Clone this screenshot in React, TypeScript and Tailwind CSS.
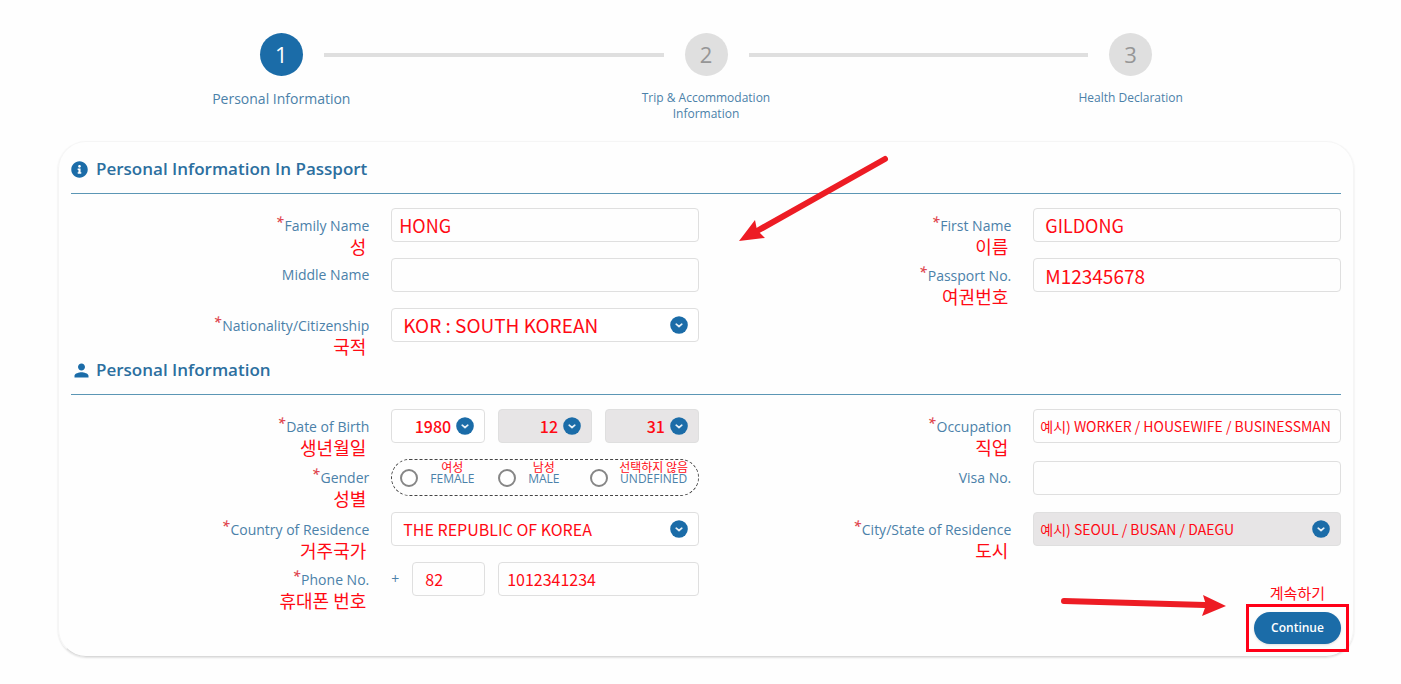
import React from "react";
import { FaInfoCircle } from "react-icons/fa";
import { MdPerson } from "react-icons/md";

const NOTE =
  "font-['Noto_Sans_CJK_KR',sans-serif] text-[#ff0a14] whitespace-nowrap";

const BOX =
  "block w-full h-[34px] rounded border border-[#dfdfdf] disabled:opacity-100 outline-none font-['Noto_Sans_CJK_KR',sans-serif] text-[#ff0a14]";

function Step({
  number,
  title,
  active = false,
  first = false,
  last = false,
}: {
  number: number;
  title: string;
  active?: boolean;
  first?: boolean;
  last?: boolean;
}) {
  return (
    <li className="flex flex-col items-center">
      <div className="flex w-full items-center gap-[21px]">
        <div className={first ? "h-1 flex-1" : "h-1 flex-1 bg-[#dfdfdf]"} />
        <div
          className={
            active
              ? "flex size-[43px] items-center justify-center rounded-full bg-[#1b6ca8] text-[22px] text-white"
              : "flex size-[43px] items-center justify-center rounded-full bg-[#dfdfdf] text-[22px] text-[#969696]"
          }
        >
          {number}
        </div>
        <div className={last ? "h-1 flex-1" : "h-1 flex-1 bg-[#dfdfdf]"} />
      </div>
      <span
        className={
          active
            ? "mt-[15px] text-center text-sm leading-4"
            : "mt-[14px] w-[140px] text-center text-xs leading-4"
        }
      >
        {title}
      </span>
    </li>
  );
}

function SectionTitle({
  icon,
  children,
}: {
  icon: React.ReactNode;
  children: React.ReactNode;
}) {
  return (
    <h2 className="flex items-center gap-1 border-b border-[#5b96b5] pb-3 text-[17px] leading-6 font-semibold text-[#2c6f9f]">
      <span className="flex w-[21px] justify-start text-[#1b6ca8]">{icon}</span>
      {children}
    </h2>
  );
}

function Field({
  id,
  label,
  note,
  required = false,
  group = false,
  children,
}: {
  id: string;
  label: string;
  note?: string;
  required?: boolean;
  group?: boolean;
  children: React.ReactNode;
}) {
  const content = (
    <>
      {required && (
        <span className="mr-px align-[4px] text-sm leading-none font-semibold text-[#e04850] italic">
          *
        </span>
      )}
      {label}
    </>
  );

  return (
    <div className="grid grid-cols-[51%_1fr] items-center">
      <div className="relative pr-[22px] text-right text-sm leading-5">
        {group ? (
          <span id={id}>{content}</span>
        ) : (
          <label htmlFor={id}>{content}</label>
        )}
        {note && (
          <span
            className={`${NOTE} absolute top-full right-[25px] text-lg leading-5`}
          >
            {note}
          </span>
        )}
      </div>
      {children}
    </div>
  );
}

function Select({
  id,
  value,
  className,
  label,
  disabled = false,
}: {
  id: string;
  value: string;
  className: string;
  label?: string;
  disabled?: boolean;
}) {
  return (
    <div className="relative">
      <select
        id={id}
        aria-label={label}
        disabled={disabled}
        className={`${BOX} appearance-none ${disabled ? "bg-[#e7e5e6]" : "bg-white"} ${className}`}
      >
        <option>{value}</option>
      </select>
      <svg
        viewBox="0 0 18 18"
        className="pointer-events-none absolute top-2 right-[11px] size-[18px]"
      >
        <circle cx="9" cy="9" r="8.8" fill="#1b6ca8" />
        <path
          d="M6.200 8.200l2.800 2.300L11.800 8.200"
          fill="none"
          stroke="#e6f0f7"
          strokeWidth="1.7"
          strokeLinecap="round"
          strokeLinejoin="round"
        />
      </svg>
    </div>
  );
}

function Gender({ name, note }: { name: string; note: string }) {
  return (
    <label className="flex items-center gap-3">
      <input
        type="radio"
        name="gender"
        className="size-[18px] appearance-none rounded-full border-2 border-[#868686] bg-white checked:bg-[#1b6ca8]"
      />
      <span className="relative pt-[3px] text-xs">
        {name}
        <span
          className={`${NOTE} absolute bottom-3 left-1/2 -translate-x-1/2 text-xs leading-4`}
        >
          {note}
        </span>
      </span>
    </label>
  );
}

function App() {
  return (
    <div className="min-h-screen bg-[#fefefe] pt-[33px] pb-6 font-['Open_Sans',sans-serif] text-[#4b81a9]">
      <ol className="grid grid-cols-3 pr-[58px] pl-[69px]">
        <Step number={1} title="Personal Information" active first />
        <Step number={2} title="Trip & Accommodation Information" />
        <Step number={3} title="Health Declaration" last />
      </ol>

      <form className="relative mt-[19px] mr-[47px] ml-[58px] rounded-[28px] border border-[#f5f5f5] border-b-[#d9d9d9] px-3 pt-[15px] pb-3 shadow-[0_1px_2px_rgba(0,0,0,0.12)]">
        <SectionTitle icon={<FaInfoCircle size={17} />}>
          Personal Information In Passport
        </SectionTitle>
        <div className="grid grid-cols-2 gap-x-[14px] gap-y-4 pt-[14px]">
          <Field id="family" label="Family Name" note="성" required>
            <input
              id="family"
              defaultValue="HONG"
              className={`${BOX} px-[7px] text-lg`}
            />
          </Field>
          <Field id="first" label="First Name" note="이름" required>
            <input
              id="first"
              defaultValue="GILDONG"
              className={`${BOX} px-[11px] text-lg`}
            />
          </Field>
          <Field id="middle" label="Middle Name">
            <input id="middle" className={`${BOX} px-[7px] text-lg`} />
          </Field>
          <Field id="passport" label="Passport No." note="여권번호" required>
            <input
              id="passport"
              defaultValue="M12345678"
              className={`${BOX} px-[11px] text-[19px]`}
            />
          </Field>
          <Field
            id="nationality"
            label="Nationality/Citizenship"
            note="국적"
            required
          >
            <Select
              id="nationality"
              value="KOR : SOUTH KOREAN"
              className="pl-[11px] text-[19px]"
            />
          </Field>
        </div>

        <div className="mt-4">
          <SectionTitle icon={<MdPerson size={21} />}>
            Personal Information
          </SectionTitle>
        </div>
        <div className="grid grid-cols-2 gap-x-[14px] gap-y-4 pt-[14px]">
          <Field id="year" label="Date of Birth" note="생년월일" required>
            <div className="grid grid-cols-3 gap-[13px]">
              <Select
                id="year"
                value="1980"
                className="pr-[33px] text-base font-medium [text-align-last:right]"
              />
              <Select
                id="month"
                label="Month of birth"
                value="12"
                className="pr-[33px] text-base font-medium [text-align-last:right]"
                disabled
              />
              <Select
                id="day"
                label="Day of birth"
                value="31"
                className="pr-[33px] text-base font-medium [text-align-last:right]"
                disabled
              />
            </div>
          </Field>
          <Field id="occupation" label="Occupation" note="직업" required>
            <input
              id="occupation"
              defaultValue="예시) WORKER / HOUSEWIFE / BUSINESSMAN"
              className={`${BOX} pl-[6px] text-sm`}
            />
          </Field>
          <Field id="gender" label="Gender" note="성별" required group>
            <div
              role="radiogroup"
              aria-labelledby="gender"
              className="grid h-[37px] grid-cols-[98fr_92fr_108fr] items-center rounded-full border border-dashed border-[#444] pl-2"
            >
              <Gender name="FEMALE" note="여성" />
              <Gender name="MALE" note="남성" />
              <Gender name="UNDEFINED" note="선택하지 않음" />
            </div>
          </Field>
          <Field id="visa" label="Visa No.">
            <input id="visa" className={`${BOX} px-[7px] text-lg`} />
          </Field>
          <Field
            id="country"
            label="Country of Residence"
            note="거주국가"
            required
          >
            <Select
              id="country"
              value="THE REPUBLIC OF KOREA"
              className="pl-[11px] text-base"
            />
          </Field>
          <Field
            id="city"
            label="City/State of Residence"
            note="도시"
            required
          >
            <Select
              id="city"
              value="예시) SEOUL / BUSAN / DAEGU"
              className="pl-[6px] text-sm"
              disabled
            />
          </Field>
          <Field id="phone" label="Phone No." note="휴대폰 번호" required>
            <div className="grid grid-cols-3 gap-[13px]">
              <div className="flex items-center">
                <span className="w-[21px] shrink-0 text-sm">+</span>
                <input
                  aria-label="Country code"
                  defaultValue="82"
                  className={`${BOX} min-w-0 px-3 text-base`}
                />
              </div>
              <div className="col-span-2">
                <input
                  id="phone"
                  defaultValue="1012341234"
                  className={`${BOX} px-2 text-base`}
                />
              </div>
            </div>
          </Field>
        </div>

        <div className="mt-4 flex justify-end">
          <div className="relative">
            <button
              type="button"
              className="h-8 w-[87px] rounded-full bg-[#1b6ca8] text-xs font-semibold text-white shadow"
            >
              Continue
            </button>
            <div className="pointer-events-none absolute -inset-2 border-3 border-[#ff0018]" />
            <span
              className={`${NOTE} absolute right-4 bottom-[41px] text-[15px] leading-5`}
            >
              계속하기
            </span>
          </div>
        </div>

        {/* arrows over the form */}
        <svg
          viewBox="0 0 152 90"
          className="pointer-events-none absolute top-[12px] left-[680px] h-[90px] w-[152px]"
        >
          <path
            d="M146 5L18 77"
            stroke="#ed1c24"
            strokeWidth="6"
            strokeLinecap="round"
          />
          <path d="M0 87L16 66L18 76L26 84Z" fill="#ed1c24" />
        </svg>
        <svg
          viewBox="0 0 166 24"
          className="pointer-events-none absolute right-[127px] bottom-[39px] h-6 w-[166px]"
        >
          <path
            d="M4 8L145 12"
            stroke="#ed1c24"
            strokeWidth="6"
            strokeLinecap="round"
          />
          <path d="M166 13L143 2L146 12L142 23Z" fill="#ed1c24" />
        </svg>
      </form>
    </div>
  );
}

export default App;
